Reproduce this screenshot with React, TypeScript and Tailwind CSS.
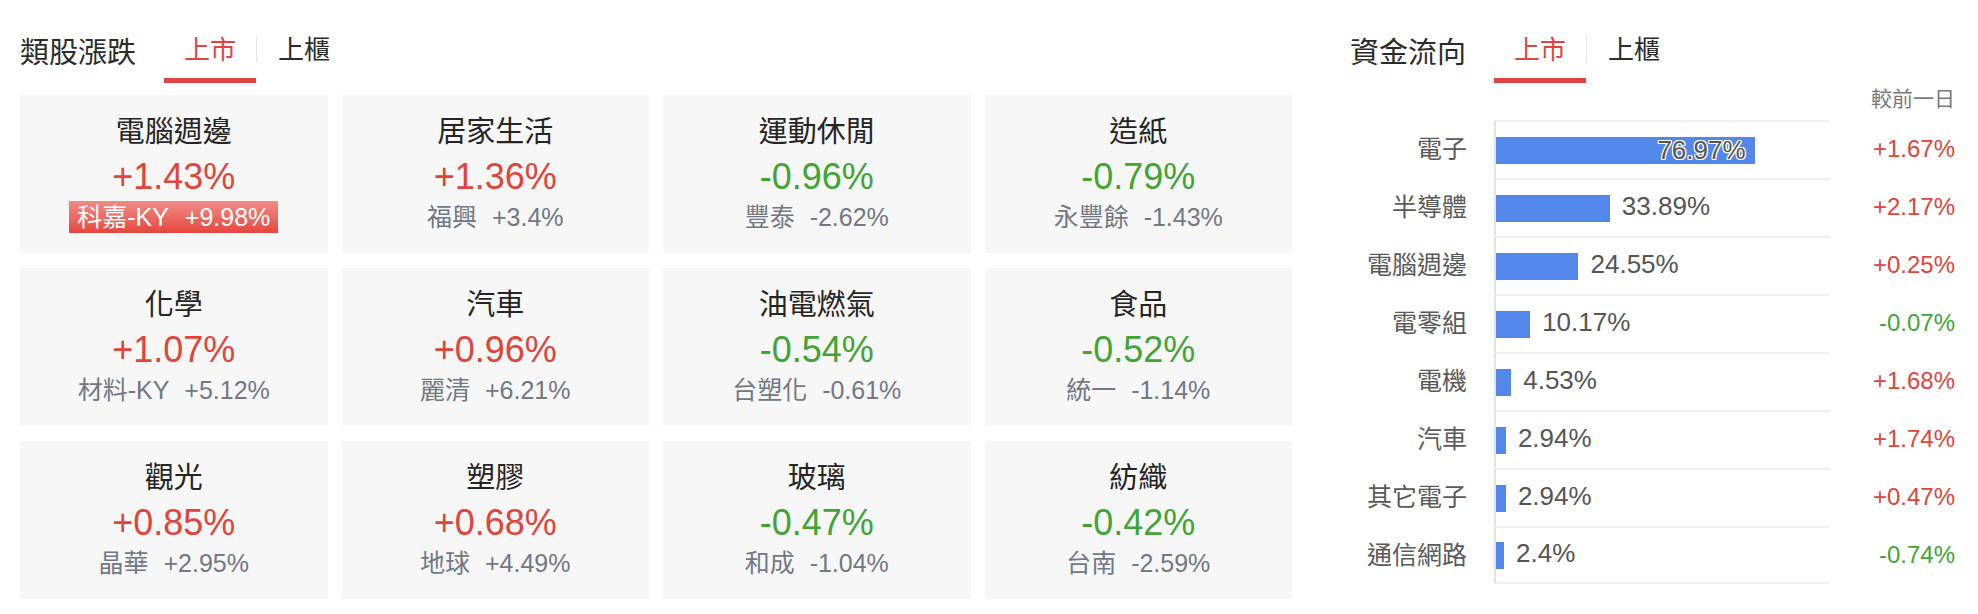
import React from "react";

type Sector = {
  name: string;
  pct: string;
  lead: string;
  leadPct: string;
  limitUp?: boolean;
};

const sectors: Sector[] = [
  { name: "電腦週邊", pct: "+1.43%", lead: "科嘉-KY", leadPct: "+9.98%", limitUp: true },
  { name: "居家生活", pct: "+1.36%", lead: "福興", leadPct: "+3.4%" },
  { name: "運動休閒", pct: "-0.96%", lead: "豐泰", leadPct: "-2.62%" },
  { name: "造紙", pct: "-0.79%", lead: "永豐餘", leadPct: "-1.43%" },
  { name: "化學", pct: "+1.07%", lead: "材料-KY", leadPct: "+5.12%" },
  { name: "汽車", pct: "+0.96%", lead: "麗清", leadPct: "+6.21%" },
  { name: "油電燃氣", pct: "-0.54%", lead: "台塑化", leadPct: "-0.61%" },
  { name: "食品", pct: "-0.52%", lead: "統一", leadPct: "-1.14%" },
  { name: "觀光", pct: "+0.85%", lead: "晶華", leadPct: "+2.95%" },
  { name: "塑膠", pct: "+0.68%", lead: "地球", leadPct: "+4.49%" },
  { name: "玻璃", pct: "-0.47%", lead: "和成", leadPct: "-1.04%" },
  { name: "紡織", pct: "-0.42%", lead: "台南", leadPct: "-2.59%" },
];

type Flow = { name: string; share: number; change: string };

const flows: Flow[] = [
  { name: "電子", share: 76.97, change: "+1.67%" },
  { name: "半導體", share: 33.89, change: "+2.17%" },
  { name: "電腦週邊", share: 24.55, change: "+0.25%" },
  { name: "電零組", share: 10.17, change: "-0.07%" },
  { name: "電機", share: 4.53, change: "+1.68%" },
  { name: "汽車", share: 2.94, change: "+1.74%" },
  { name: "其它電子", share: 2.94, change: "+0.47%" },
  { name: "通信網路", share: 2.4, change: "-0.74%" },
];

const CHART_W = 336;

function Tabs() {
  return (
    <div className="flex items-start">
      <div className="h-[53px] px-[20px] border-b-[5px] border-[#e0463f] text-[26px] leading-[40px] text-[#e0463f] cursor-pointer">
        上市
      </div>
      <div className="mt-[6px] h-[26px] w-px bg-[#e6e6e6]" />
      <div className="h-[53px] px-[21px] border-b-[5px] border-transparent text-[26px] leading-[40px] text-[#2b2b2b] cursor-pointer">
        上櫃
      </div>
    </div>
  );
}

function Header({ title }: { title: string }) {
  return (
    <div className="flex items-start gap-[28px] pt-[30px]">
      <h2 className="mt-[3px] text-[29px] leading-[40px] text-[#2b2b2b] font-normal">{title}</h2>
      <Tabs />
    </div>
  );
}

function SectorCard({ s }: { s: Sector }) {
  const up = s.pct.startsWith("+");
  return (
    <div className="h-[158px] bg-[#f7f7f7] pt-[17px] text-center">
      <div className="text-[29px] leading-[41px] text-[#252525]">{s.name}</div>
      <div
        className={`text-[36px] leading-[48px] ${up ? "text-[#e0443b]" : "text-[#43a436]"}`}
      >
        {s.pct}
      </div>
      <div className="h-[32px] flex justify-center">
        {s.limitUp ? (
          <span className="h-[32px] px-[8px] text-[25px] leading-[32px] text-white bg-gradient-to-b from-[#f08b86] to-[#e4453d]">
            {s.lead}
            <span className="ml-[16px]">{s.leadPct}</span>
          </span>
        ) : (
          <span className="text-[25px] leading-[32px] text-[#727884]">
            {s.lead}
            <span className="ml-[15px]">{s.leadPct}</span>
          </span>
        )}
      </div>
    </div>
  );
}

function FlowRow({ f, last }: { f: Flow; last: boolean }) {
  const w = (f.share / 100) * CHART_W;
  const inside = f.share > 50;
  const up = f.change.startsWith("+");
  return (
    <div className="flex h-[58px] items-center">
      <div className="w-[117px] text-right text-[25px] leading-[30px] text-[#5a5a5a]">{f.name}</div>
      <div
        className={`ml-[27px] h-full w-[336px] flex items-center border-l-2 border-l-[#e3e3e3] border-t-2 border-t-[#f0f0f0] ${
          last ? "border-b-2 border-b-[#f0f0f0]" : ""
        }`}
      >
        <div className="relative h-[27px] bg-[#5487ea]" style={{ width: `${w}px` }}>
          {inside && (
            <span className="absolute right-[9px] top-0 text-[26px] leading-[27px] text-[#555] [text-shadow:1px_1px_0_#fff,-1px_-1px_0_#fff,1px_-1px_0_#fff,-1px_1px_0_#fff,0_1px_0_#fff,0_-1px_0_#fff,1px_0_0_#fff,-1px_0_0_#fff]">
              {f.share.toFixed(2)}%
            </span>
          )}
        </div>
        {!inside && (
          <span className="ml-[12px] -mt-[4px] text-[26px] leading-[30px] text-[#555]">{f.share}%</span>
        )}
      </div>
      <div
        className={`flex-1 text-right text-[24px] leading-[30px] ${up ? "text-[#e0443b]" : "text-[#43a436]"}`}
      >
        {f.change}
      </div>
    </div>
  );
}

export default function App() {
  return (
    <div className="flex h-[614px] bg-white pl-[20px] pr-[23px] font-['Liberation_Sans','Noto_Sans_CJK_TC',sans-serif]">
      <section className="w-[1272px]">
        <Header title="類股漲跌" />
        <div className="mt-[12px] grid grid-cols-4 gap-x-[14px] gap-y-[15px]">
          {sectors.map((s) => (
            <SectorCard key={s.name} s={s} />
          ))}
        </div>
      </section>
      <section className="ml-[58px] flex-1">
        <Header title="資金流向" />
        <div className="h-[37px] text-right text-[21px] leading-[31px] text-[#7a7a7a]">較前一日</div>
        <div>
          {flows.map((f, i) => (
            <FlowRow key={f.name} f={f} last={i === flows.length - 1} />
          ))}
        </div>
      </section>
    </div>
  );
}
